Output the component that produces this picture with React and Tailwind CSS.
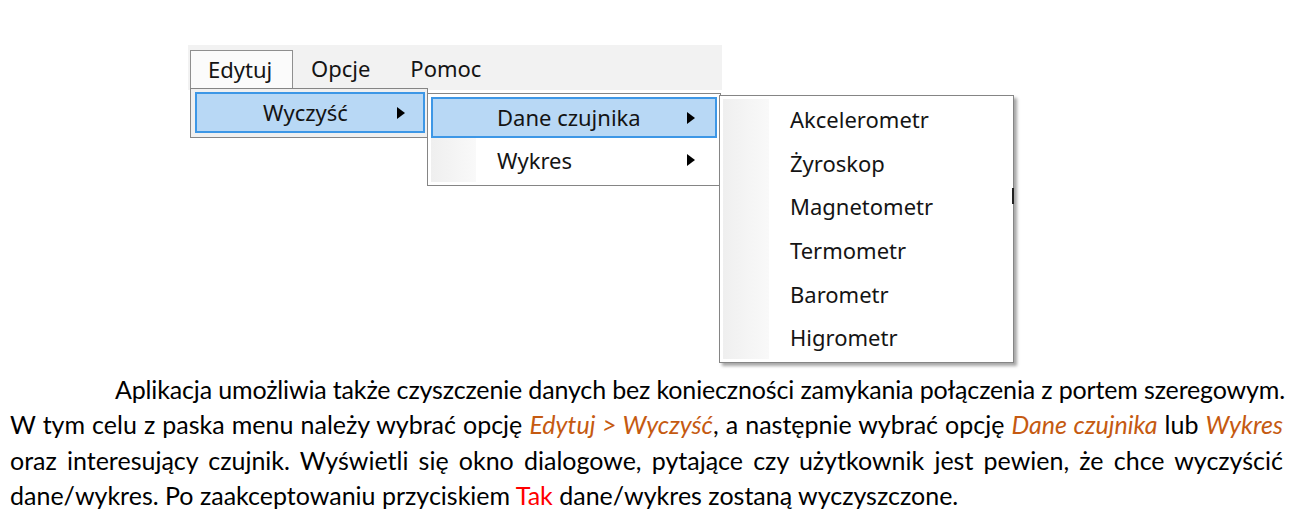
import React from "react";

const Arrow = () => (
  <svg width="8" height="12" viewBox="0 0 8 12" className="shrink-0">
    <path d="M0 0 L8 6 L0 12 Z" fill="#000" />
  </svg>
);

const sensors = ["Akcelerometr", "Żyroskop", "Magnetometr", "Termometr", "Barometr", "Higrometr"];

const orange = "text-[#c55a11] italic";

export default function App() {
  return (
    <div className="w-[1308px] h-[522px] bg-white overflow-hidden">
      {/* menu screenshot */}
      <div className="relative h-[372px] font-['Noto_Sans',sans-serif] text-[22px] text-[#141414]">
        <div className="absolute left-[188px] top-[45px] w-[534px] h-[45px] bg-[#f2f2f2]" />
        <div className="absolute left-[188px] top-[45px] flex items-center h-[45px]">
          <div className="ml-[2px] mt-[4px] h-[40px] w-[103px] bg-[#fbfbfb] border-t border-l border-r border-[#8f8f8f] flex items-center pl-[17px] pb-[2px]">
            Edytuj
          </div>
          <div className="ml-[18px] mt-[2px]">Opcje</div>
          <div className="ml-[40px] mt-[2px]">Pomoc</div>
        </div>

        {/* dropdown 1 */}
        <div className="absolute left-[190px] top-[88px] w-[238px] h-[50px] bg-[#f0f0f0] border border-[#858585] p-[3px] pl-[4px]">
          <div className="h-[41px] w-[230px] bg-[#b8d8f5] border-2 border-[#3d97e6] flex items-center pl-[66px] pr-[18px] justify-between">
            <span>Wyczyść</span>
            <Arrow />
          </div>
        </div>

        {/* dropdown 2 */}
        <div className="absolute left-[427px] top-[93px] w-[294px] h-[93px] bg-white border border-[#858585] p-[3px]">
          <div className="absolute left-[3px] top-[3px] bottom-[3px] w-[45px] bg-gradient-to-r from-[#efefef] to-[#f9f9f9]" />
          <div className="relative h-[41px] bg-[#b8d8f5] border-2 border-[#3d97e6] flex items-center pl-[64px] pr-[20px] justify-between">
            <span>Dane czujnika</span>
            <Arrow />
          </div>
          <div className="relative h-[44px] flex items-center pl-[66px] pr-[22px] justify-between">
            <span>Wykres</span>
            <Arrow />
          </div>
        </div>

        {/* dropdown 3 */}
        <div className="absolute left-[719px] top-[95px] w-[295px] h-[268px] bg-white border border-[#858585] shadow-[3px_3px_3px_rgba(0,0,0,0.35)] py-[3px]">
          <div className="absolute left-[3px] top-[3px] bottom-[3px] w-[46px] bg-gradient-to-r from-[#efefef] to-[#f9f9f9]" />
          <div className="relative flex flex-col">
            {sensors.map((s) => (
              <div key={s} className="h-[43.6px] flex items-center pl-[70px] pb-[2px]">
                <span>{s}</span>
              </div>
            ))}
          </div>
        </div>
        <div className="absolute left-[1012px] top-[188px] w-[2px] h-[16px] bg-[#222]" />
      </div>

      {/* paragraph */}
      <div className="font-['Lato',sans-serif] text-[25px] leading-[35.3px] text-black pl-[10px] w-[1283px] whitespace-nowrap">
        <div className="pl-[105px] tracking-[-0.15px]">
          Aplikacja umożliwia także czyszczenie danych bez konieczności zamykania połączenia z portem szeregowym.
        </div>
        <div className="text-justify [text-align-last:justify]">
          W tym celu z paska menu należy wybrać opcję <span className={orange}>Edytuj &gt; Wyczyść</span>, a następnie wybrać opcję{" "}
          <span className={orange}>Dane czujnika</span> lub <span className={orange}>Wykres</span>
        </div>
        <div className="text-justify [text-align-last:justify]">
          oraz interesujący czujnik. Wyświetli się okno dialogowe, pytające czy użytkownik jest pewien, że chce wyczyścić
        </div>
        <div>
          dane/wykres. Po zaakceptowaniu przyciskiem <span className="text-[#ff0000]">Tak</span> dane/wykres zostaną wyczyszczone.
        </div>
      </div>
    </div>
  );
}
